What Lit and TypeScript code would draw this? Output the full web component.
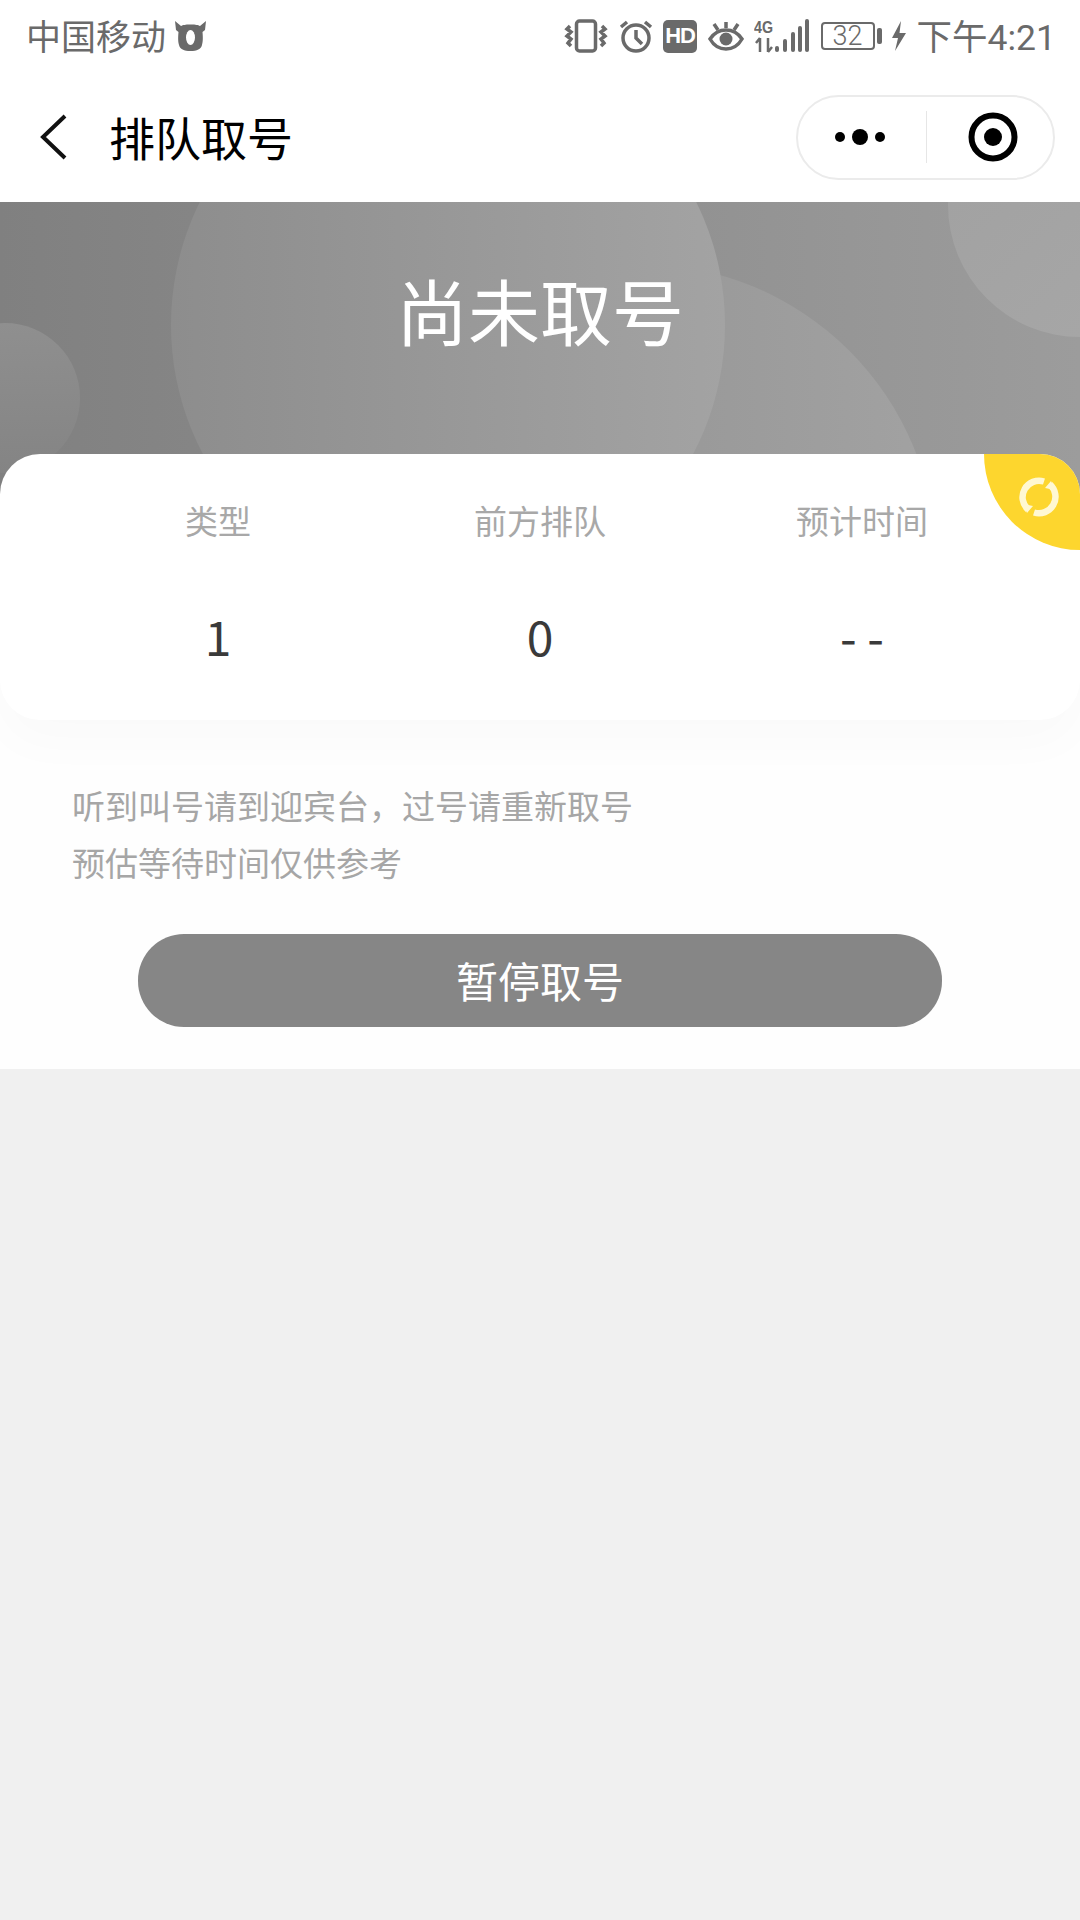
import { LitElement, html, css } from 'lit'
import { customElement } from 'lit/decorators.js'

@customElement('app-root')
export class AppRoot extends LitElement {
  static styles = [
    css`
      :host {
        display: block;
        min-height: 1920px;
        background: #f0f0f0;
        font-family: "Noto Sans CJK SC", "Noto Sans", sans-serif;
      }

      .status {
        display: flex;
        align-items: center;
        justify-content: space-between;
        height: 72px;
        padding: 0 24px 0 26px;
        background: #fff;
        color: #6a6a6a;
        font-size: 35px;
        box-sizing: border-box;
      }

      .status-left, .status-right {
        display: flex;
        align-items: center;
      }

      .status-left { gap: 9px; }
      .status-right { gap: 10.5px; }

      .carrier { padding-bottom: 4px; }

      .battery {
        display: flex;
        align-items: center;
        gap: 2px;
      }

      .battery-body {
        display: flex;
        align-items: center;
        justify-content: center;
        width: 54px;
        height: 28px;
        box-sizing: border-box;
        border: 2px solid #6a6a6a;
        border-radius: 4px;
        font-family: Roboto, sans-serif;
        font-size: 27px;
        font-weight: 300;
      }

      .battery-nub {
        width: 5px;
        height: 16px;
        border-radius: 2px;
        background: #6a6a6a;
      }

      .hd {
        display: flex;
        align-items: center;
        justify-content: center;
        width: 34px;
        height: 33px;
        border-radius: 5px;
        background: #6a6a6a;
        color: #fff;
        font-family: "Liberation Sans", sans-serif;
        font-size: 22px;
        font-weight: 700;
        letter-spacing: -1px;
      }

      .time {
        padding-bottom: 4px;
        font-family: Roboto, "Noto Sans CJK SC", sans-serif;
        font-size: 35.5px;
        white-space: nowrap;
      }

      .nav {
        display: flex;
        align-items: center;
        height: 130px;
        padding: 0 25px 0 40px;
        background: #fff;
        box-sizing: border-box;
      }

      .nav-title {
        flex: 1;
        margin-left: 41px;
        padding-bottom: 3px;
        font-size: 46px;
        color: #000;
      }

      .capsule {
        display: flex;
        align-items: center;
        width: 259px;
        height: 85px;
        box-sizing: border-box;
        border: 2px solid #ebebeb;
        border-radius: 43px;
      }

      .capsule-part {
        display: flex;
        align-items: center;
        justify-content: center;
        box-sizing: border-box;
      }

      .capsule-more {
        flex: 0 0 128px;
        padding-right: 4px;
      }

      .capsule-target {
        flex: 1;
        padding-left: 6px;
      }

      .capsule-line {
        width: 1px;
        height: 52px;
        background: #e6e6e6;
      }

      .banner {
        position: relative;
        height: 292px;
        padding-top: 62px;
        box-sizing: border-box;
        overflow: hidden;
        background: #868686;
        text-align: center;
      }

      .banner-bg {
        position: absolute;
        top: 0;
        left: 0;
      }

      .banner-title {
        position: relative;
        font-size: 72px;
        line-height: 90px;
        color: #fff;
      }

      .content {
        background: #fefefe;
        padding-bottom: 42px;
      }

      .card {
        position: relative;
        display: grid;
        grid-template-columns: repeat(3, 1fr);
        margin-top: -40px;
        padding: 43px 57px 50px;
        border-radius: 40px;
        background: #fff;
        box-shadow: 0 24px 50px rgba(0, 0, 0, 0.02);
        overflow: hidden;
        text-align: center;
      }

      .label {
        font-size: 33px;
        line-height: 46px;
        color: #a8a8a8;
      }

      .value {
        margin-top: 57px;
        font-size: 48px;
        line-height: 70px;
        color: #3a3a3a;
      }

      .refresh {
        position: absolute;
        top: -96px;
        right: -96px;
        width: 192px;
        height: 192px;
        border-radius: 50%;
        background: #fdd62e;
      }

      .refresh svg {
        position: absolute;
        top: 117px;
        left: 33px;
      }

      .notes {
        margin-top: 57px;
        padding-left: 72px;
        font-size: 33px;
        line-height: 57px;
        color: #a6a6a6;
      }

      .btn {
        display: flex;
        align-items: center;
        justify-content: center;
        height: 93px;
        margin: 43px 138px 0;
        padding-bottom: 2px;
        box-sizing: border-box;
        border-radius: 46px;
        background: #868686;
        color: #fff;
        font-size: 42px;
      }
    `
  ];

  render () {
    return html`
      <div class="status">
        <div class="status-left">
          <span class="carrier">中国移动</span>
          <svg width="31" height="32" viewBox="0 0 31 32">
            <path fill="#6a6a6a" d="M0 1l6 5c2-1 4-1.500 9.500-1.500S23 5 25 6l6-5-1 9-2.500 2c.5 6 .5 9-.5 13-1 4-5 6-11.500 6S5 29 4 25c-1-4-1-7-.5-13L1 10z"/>
            <ellipse cx="15.500" cy="17.500" rx="4.500" ry="7.500" fill="#fff"/>
          </svg>
        </div>
        <div class="status-right">
          <svg width="44" height="34" viewBox="0 0 44 34" fill="none" stroke="#6a6a6a" stroke-width="3.500">
            <rect x="12.500" y="2" width="19" height="30" rx="3"/>
            <path d="M6 7l-3 3 4 3-4 4 4 3-3 4 3 3M38 7l3 3-4 3 4 4-4 3 3 4-3 3"/>
          </svg>
          <svg width="34" height="34" viewBox="0 0 34 34" fill="none" stroke="#6a6a6a" stroke-width="3.500">
            <circle cx="17" cy="19" r="13"/>
            <path d="M17 11v8l6 6M2 8l6-5M32 8l-6-5"/>
          </svg>
          <div class="hd">HD</div>
          <svg width="36" height="32" viewBox="0 0 36 32" fill="none" stroke="#6a6a6a" stroke-width="3.500">
            <path d="M2 19c4-6 9-9 16-9s12 3 16 9c-4 7-9 10-16 10S6 26 2 19z"/>
            <circle cx="18" cy="19" r="6.500" fill="#6a6a6a" stroke="none"/>
            <path d="M18 2v6M6 4l4 6M30 4l-4 6"/>
          </svg>
          <svg width="56" height="36" viewBox="0 0 56 36">
            <text x="0" y="15" font-family="Liberation Sans, sans-serif" font-size="17" font-weight="700" fill="#6a6a6a" textLength="19" lengthAdjust="spacingAndGlyphs">4G</text>
            <path stroke="#6a6a6a" stroke-width="2.500" fill="none" d="M6 20v14M2 25l4-5M14 20v14M18 29l-4 5"/>
            <g fill="#6a6a6a">
              <rect x="21" y="28" width="4" height="6" rx="2"/>
              <rect x="29" y="21" width="4" height="13" rx="2"/>
              <rect x="37" y="14" width="4" height="20" rx="2"/>
              <rect x="44" y="8" width="4" height="26" rx="2"/>
              <rect x="51" y="1" width="4" height="33" rx="2"/>
            </g>
          </svg>
          <div class="battery">
            <div class="battery-body">32</div>
            <div class="battery-nub"></div>
          </div>
          <svg width="14" height="30" viewBox="0 0 14 30">
            <path fill="#6a6a6a" d="M9 0L0 17h6L3 30l11-18H7.500z"/>
          </svg>
          <span class="time">下午4:21</span>
        </div>
      </div>

      <div class="nav">
        <svg width="28" height="46" viewBox="0 0 28 46" fill="none" stroke="#111" stroke-width="4">
          <path d="M25 2L3 23l22 21"/>
        </svg>
        <div class="nav-title">排队取号</div>
        <div class="capsule">
          <div class="capsule-part capsule-more">
            <svg width="54" height="18" viewBox="0 0 54 18" fill="#000">
              <circle cx="7" cy="9" r="5"/>
              <circle cx="27" cy="9" r="8"/>
              <circle cx="47" cy="9" r="5"/>
            </svg>
          </div>
          <div class="capsule-line"></div>
          <div class="capsule-part capsule-target">
            <svg width="50" height="50" viewBox="0 0 50 50">
              <circle cx="25" cy="25" r="21.500" fill="none" stroke="#000" stroke-width="6"/>
              <circle cx="25" cy="25" r="9" fill="#000"/>
            </svg>
          </div>
        </div>
      </div>

      <div class="banner">
        <svg class="banner-bg" width="1080" height="292" viewBox="0 0 1080 292">
          <defs>
            <linearGradient id="bg" x1="0" y1="0" x2="1" y2="0">
              <stop offset="0" stop-color="#808080"/>
              <stop offset="1" stop-color="#9c9c9c"/>
            </linearGradient>
            <linearGradient id="big" x1="0" y1="0" x2="1" y2="0">
              <stop offset="0" stop-color="#8d8d8d"/>
              <stop offset="1" stop-color="#a3a3a3"/>
            </linearGradient>
            <linearGradient id="mid" x1="0" y1="0" x2="1" y2="0">
              <stop offset="0.3" stop-color="#949494"/>
              <stop offset="1" stop-color="#a2a2a2"/>
            </linearGradient>
            <linearGradient id="corner" x1="0" y1="0" x2="1" y2="1">
              <stop offset="0" stop-color="#a0a0a0"/>
              <stop offset="1" stop-color="#a8a8a8"/>
            </linearGradient>
            <linearGradient id="side" x1="0" y1="0" x2="0" y2="1">
              <stop offset="0" stop-color="#8f8f8f"/>
              <stop offset="1" stop-color="#848484"/>
            </linearGradient>
          </defs>
          <rect width="1080" height="292" fill="url(#bg)"/>
          <circle cx="640" cy="358" r="296" fill="url(#mid)"/>
          <circle cx="448" cy="123" r="277" fill="url(#big)"/>
          <circle cx="1080" cy="3" r="132" fill="url(#corner)"/>
          <circle cx="5" cy="196" r="75" fill="url(#side)"/>
        </svg>
        <div class="banner-title">尚未取号</div>
      </div>

      <div class="content">
        <div class="card">
          <div class="label">类型</div>
          <div class="label">前方排队</div>
          <div class="label">预计时间</div>
          <div class="value">1</div>
          <div class="value">0</div>
          <div class="value">- -</div>
          <div class="refresh">
            <svg width="44" height="44" viewBox="0 0 44 44" fill="none" stroke="#fff8d2" stroke-width="6.500">
              <path d="M27 6.500A16.500 16.500 0 0 0 11 34.500M17 37.500A16.500 16.500 0 0 0 33 9.500"/>
              <path fill="#fff8d2" stroke="none" d="M6 29l10 2-6 7zM38 15l-10-2 6-7z"/>
            </svg>
          </div>
        </div>
        <div class="notes">
          <div>听到叫号请到迎宾台，过号请重新取号</div>
          <div>预估等待时间仅供参考</div>
        </div>
        <div class="btn">暂停取号</div>
      </div>
    `
  }
}
